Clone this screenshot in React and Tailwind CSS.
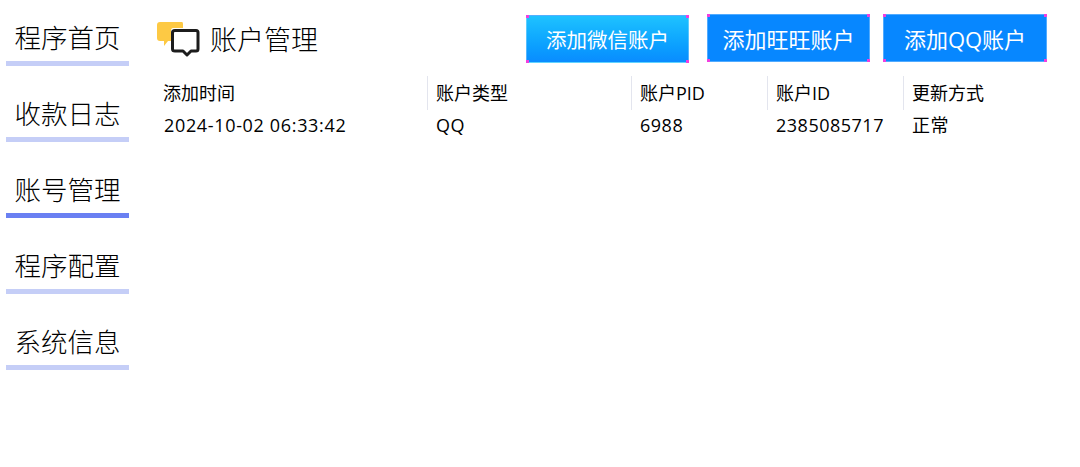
import React from 'react'

const font = "font-['Open_Sans','Noto_Sans_CJK_SC',sans-serif]"
const navItems = ['程序首页', '收款日志', '账号管理', '程序配置', '系统信息']
const columns = [
  { title: '添加时间', value: '2024-10-02 06:33:42', width: 'w-[272px]', spacing: 'tracking-[0.66px]' },
  { title: '账户类型', value: 'QQ', width: 'w-[204px]', spacing: 'tracking-[0.5px]' },
  { title: '账户PID', value: '6988', width: 'w-[136px]', spacing: 'tracking-[0.5px]' },
  { title: '账户ID', value: '2385085717', width: 'w-[136px]', spacing: 'tracking-[0.5px]' },
  { title: '更新方式', value: '正常', width: 'w-[144px]', spacing: 'tracking-[0.5px]' },
]

function Corners() {
  return (
    <>
      <span className="absolute -left-px -top-px size-[3px] bg-[#f03fe0]" />
      <span className="absolute -right-px -top-px size-[3px] bg-[#f03fe0]" />
      <span className="absolute -left-px -bottom-px size-[3px] bg-[#f03fe0]" />
      <span className="absolute -right-px -bottom-px size-[3px] bg-[#f03fe0]" />
    </>
  )
}

function ActionButton({ label, active, className }) {
  return (
    <button className={`relative h-[48px] flex items-center justify-center pt-[2px] text-white border border-white/30 ${active ? 'text-[20.5px] bg-gradient-to-b from-[#1fc2ff] to-[#0a8cff]' : 'text-[22px] bg-[#0787ff]'} ${className}`}>
      {label}
      <Corners />
    </button>
  )
}

function ChatIcon() {
  return (
    <svg width="43" height="36" viewBox="0 0 43 36" className="shrink-0">
      <path d="M3 0H25Q26 0 26 2V6H16Q14 6 14 9V19H11L7 24V19H3Q0 19 0 16V3Q0 0 3 0Z" fill="#fdc944" />
      <path d="M18 8.500H39Q41 8.500 41 10.500V27Q41 29 39 29H34L30 33L26 29H18Q15.500 29 15.500 27V10.500Q15.500 8.500 18 8.500Z" fill="#fff" stroke="#1c1c1c" strokeWidth="3" strokeLinejoin="round" />
    </svg>
  )
}

export default function App() {
  return (
    <div className={`w-[1080px] h-[467px] bg-white flex ${font} text-black overflow-hidden`}>
      <nav className="w-[123px] ml-[6px] flex flex-col pt-[15px] gap-[25px] shrink-0">
        {navItems.map((item, i) => (
          <div key={item} className={`h-[51px] border-b-[5px] flex items-center justify-center text-[26.5px] font-light leading-none ${i === 2 ? 'border-[#6a80f2]' : 'border-[#c5cef7]'}`}>
            {item}
          </div>
        ))}
      </nav>

      <main className="flex-1 ml-[28px] min-w-0">
        <div className="h-[76px] flex items-start">
          <div className="flex items-center mt-[22px] gap-[10px]">
            <ChatIcon />
            <h1 className="text-[27px] leading-[34px] font-light">账户管理</h1>
          </div>
          <ActionButton label="添加微信账户" active className="w-[163px] ml-auto mt-[15px]" />
          <ActionButton label="添加旺旺账户" className="w-[163px] ml-[18px] mt-[14px]" />
          <ActionButton label="添加QQ账户" className="w-[164px] ml-[13px] mr-[33px] mt-[14px]" />
        </div>

        <div className="flex text-[18px] -ml-[2px]">
          {columns.map((col, i) => (
            <div key={col.title} className={col.width}>
              <div className={`h-[34px] flex items-center pl-[8px] ${i > 0 ? 'border-l border-[#e3e5ee]' : ''}`}>{col.title}</div>
              <div className={`h-[30px] flex items-center pl-[9px] ${col.spacing}`}>{col.value}</div>
            </div>
          ))}
        </div>
      </main>
    </div>
  )
}
